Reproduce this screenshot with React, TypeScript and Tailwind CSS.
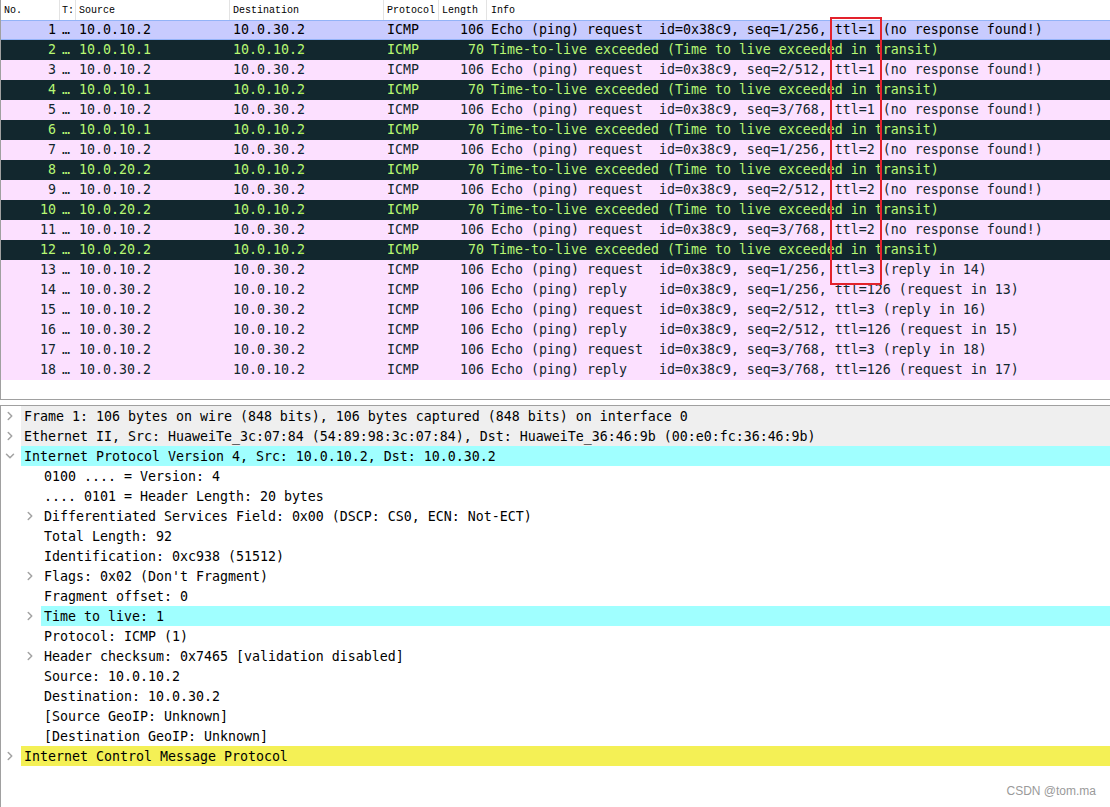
import { ChevronRight, ChevronDown } from "lucide-react";

type Kind = "sel" | "dark" | "pink";

interface Packet {
  no: number;
  src: string;
  dst: string;
  len: number;
  info: string;
  kind: Kind;
}

const REQ = "Echo (ping) request  id=0x38c9, ";
const REP = "Echo (ping) reply    id=0x38c9, ";
const TTL_EX = "Time-to-live exceeded (Time to live exceeded in transit)";

const packets: Packet[] = [
  { no: 1, src: "10.0.10.2", dst: "10.0.30.2", len: 106, info: REQ + "seq=1/256, ttl=1 (no response found!)", kind: "sel" },
  { no: 2, src: "10.0.10.1", dst: "10.0.10.2", len: 70, info: TTL_EX, kind: "dark" },
  { no: 3, src: "10.0.10.2", dst: "10.0.30.2", len: 106, info: REQ + "seq=2/512, ttl=1 (no response found!)", kind: "pink" },
  { no: 4, src: "10.0.10.1", dst: "10.0.10.2", len: 70, info: TTL_EX, kind: "dark" },
  { no: 5, src: "10.0.10.2", dst: "10.0.30.2", len: 106, info: REQ + "seq=3/768, ttl=1 (no response found!)", kind: "pink" },
  { no: 6, src: "10.0.10.1", dst: "10.0.10.2", len: 70, info: TTL_EX, kind: "dark" },
  { no: 7, src: "10.0.10.2", dst: "10.0.30.2", len: 106, info: REQ + "seq=1/256, ttl=2 (no response found!)", kind: "pink" },
  { no: 8, src: "10.0.20.2", dst: "10.0.10.2", len: 70, info: TTL_EX, kind: "dark" },
  { no: 9, src: "10.0.10.2", dst: "10.0.30.2", len: 106, info: REQ + "seq=2/512, ttl=2 (no response found!)", kind: "pink" },
  { no: 10, src: "10.0.20.2", dst: "10.0.10.2", len: 70, info: TTL_EX, kind: "dark" },
  { no: 11, src: "10.0.10.2", dst: "10.0.30.2", len: 106, info: REQ + "seq=3/768, ttl=2 (no response found!)", kind: "pink" },
  { no: 12, src: "10.0.20.2", dst: "10.0.10.2", len: 70, info: TTL_EX, kind: "dark" },
  { no: 13, src: "10.0.10.2", dst: "10.0.30.2", len: 106, info: REQ + "seq=1/256, ttl=3 (reply in 14)", kind: "pink" },
  { no: 14, src: "10.0.30.2", dst: "10.0.10.2", len: 106, info: REP + "seq=1/256, ttl=126 (request in 13)", kind: "pink" },
  { no: 15, src: "10.0.10.2", dst: "10.0.30.2", len: 106, info: REQ + "seq=2/512, ttl=3 (reply in 16)", kind: "pink" },
  { no: 16, src: "10.0.30.2", dst: "10.0.10.2", len: 106, info: REP + "seq=2/512, ttl=126 (request in 15)", kind: "pink" },
  { no: 17, src: "10.0.10.2", dst: "10.0.30.2", len: 106, info: REQ + "seq=3/768, ttl=3 (reply in 18)", kind: "pink" },
  { no: 18, src: "10.0.30.2", dst: "10.0.10.2", len: 106, info: REP + "seq=3/768, ttl=126 (request in 17)", kind: "pink" },
];

const rowStyle: Record<Kind, string> = {
  sel: "bg-[#c8cbfe] text-[#000000] border-y border-[#93b3f7]",
  dark: "bg-[#12272e] text-[#b7f774]",
  pink: "bg-[#fce0ff] text-[#12272e]",
};

type Mark = "none" | "open" | "closed";

interface TreeItem {
  text: string;
  level: 0 | 1;
  mark: Mark;
  bg?: string;
}

const tree: TreeItem[] = [
  { text: "Frame 1: 106 bytes on wire (848 bits), 106 bytes captured (848 bits) on interface 0", level: 0, mark: "closed", bg: "bg-[#efefef]" },
  { text: "Ethernet II, Src: HuaweiTe_3c:07:84 (54:89:98:3c:07:84), Dst: HuaweiTe_36:46:9b (00:e0:fc:36:46:9b)", level: 0, mark: "closed", bg: "bg-[#efefef]" },
  { text: "Internet Protocol Version 4, Src: 10.0.10.2, Dst: 10.0.30.2", level: 0, mark: "open", bg: "bg-[#a0ffff]" },
  { text: "0100 .... = Version: 4", level: 1, mark: "none" },
  { text: ".... 0101 = Header Length: 20 bytes", level: 1, mark: "none" },
  { text: "Differentiated Services Field: 0x00 (DSCP: CS0, ECN: Not-ECT)", level: 1, mark: "closed" },
  { text: "Total Length: 92", level: 1, mark: "none" },
  { text: "Identification: 0xc938 (51512)", level: 1, mark: "none" },
  { text: "Flags: 0x02 (Don't Fragment)", level: 1, mark: "closed" },
  { text: "Fragment offset: 0", level: 1, mark: "none" },
  { text: "Time to live: 1", level: 1, mark: "closed", bg: "bg-[#a0ffff]" },
  { text: "Protocol: ICMP (1)", level: 1, mark: "none" },
  { text: "Header checksum: 0x7465 [validation disabled]", level: 1, mark: "closed" },
  { text: "Source: 10.0.10.2", level: 1, mark: "none" },
  { text: "Destination: 10.0.30.2", level: 1, mark: "none" },
  { text: "[Source GeoIP: Unknown]", level: 1, mark: "none" },
  { text: "[Destination GeoIP: Unknown]", level: 1, mark: "none" },
  { text: "Internet Control Message Protocol", level: 0, mark: "closed", bg: "bg-[#f4f055]" },
];

function HeaderCell({ label, className }: { label: string; className: string }) {
  return (
    <div className={`h-full flex items-center border-r border-[#e3e3e3] ${className}`}>
      {label}
    </div>
  );
}

function PacketRow({ p }: { p: Packet }) {
  return (
    <div className={`flex h-[20px] items-center whitespace-pre ${rowStyle[p.kind]}`}>
      <div className="w-[59px] text-right pr-[4px]">{p.no}</div>
      <div className="w-[16px] pl-[2px]">…</div>
      <div className="w-[154px] pl-[3px]">{p.src}</div>
      <div className="w-[154px] pl-[3px]">{p.dst}</div>
      <div className="w-[55px] pl-[3px]">ICMP</div>
      <div className="w-[48px] text-right pr-[3px]">{p.len}</div>
      <div className="flex-1 pl-[4px]">{p.info}</div>
    </div>
  );
}

function TreeRow({ item }: { item: TreeItem }) {
  return (
    <div className="flex h-[20px] items-stretch whitespace-pre">
      {item.level === 1 && <div className="w-[20px] shrink-0" />}
      <div className="w-[20px] shrink-0 flex items-center pl-[2px] text-[#a3a3a3]">
        {item.mark === "closed" && <ChevronRight size={14} strokeWidth={2.6} />}
        {item.mark === "open" && <ChevronDown size={14} strokeWidth={2.6} />}
      </div>
      <div className={`flex-1 flex items-center pl-[3px] pt-[1px] text-[#000000] ${item.bg ?? ""}`}>
        {item.text}
      </div>
    </div>
  );
}

export default function App() {
  return (
    <div className="relative w-[1110px] h-[807px] overflow-hidden bg-white font-['DejaVu_Sans_Mono',monospace] text-[13.29px]">
      {/* packet list */}
      <section className="h-[400px] flex flex-col border-b border-l border-[#a0a0a0]">
        <div className="flex h-[20px] bg-white text-[10px] text-[#000000] font-['Liberation_Mono',monospace]">
          <HeaderCell label="No." className="w-[59px] pl-[3px]" />
          <HeaderCell label="T:" className="w-[16px] pl-[2px]" />
          <HeaderCell label="Source" className="w-[154px] pl-[3px]" />
          <HeaderCell label="Destination" className="w-[154px] pl-[3px]" />
          <HeaderCell label="Protocol" className="w-[55px] pl-[3px]" />
          <HeaderCell label="Length" className="w-[48px] pl-[3px]" />
          <div className="flex-1 flex items-center pl-[4px]">Info</div>
        </div>
        <div className="flex flex-col">
          {packets.map((p) => (
            <PacketRow key={p.no} p={p} />
          ))}
        </div>
      </section>

      <div className="h-[5px]" />

      {/* packet details */}
      <section className="flex flex-col border-t border-l border-[#a0a0a0] h-[402px]">
        {tree.map((item, i) => (
          <TreeRow key={i} item={item} />
        ))}
      </section>

      {/* annotation box */}
      <div className="absolute left-[830px] top-[17px] w-[52px] h-[268px] border-2 border-[#e3222c]" />

      <div className="absolute right-[14px] bottom-[7px] text-[12px] text-[#9a9a9a] font-['Liberation_Sans',sans-serif]">
        CSDN @tom.ma
      </div>
    </div>
  );
}
